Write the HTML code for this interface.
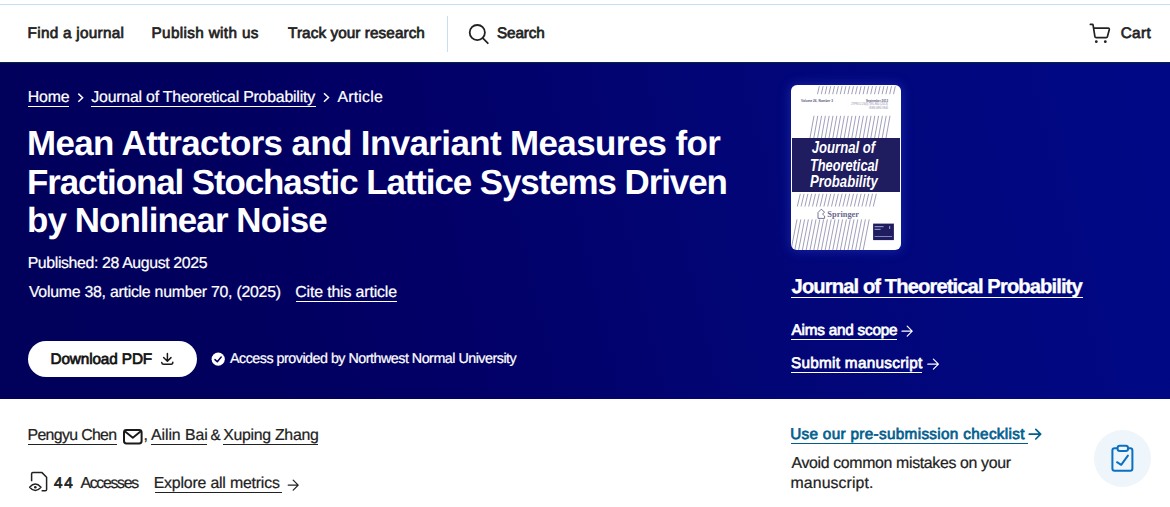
<!DOCTYPE html>
<html><head><meta charset="utf-8">
<style>
html,body{margin:0;padding:0;}
body{width:1170px;height:507px;overflow:hidden;position:relative;background:#fff;font-family:"Liberation Sans",sans-serif;}
.t{position:absolute;white-space:nowrap;text-rendering:geometricPrecision;}
.u{position:absolute;height:1px;}
#topline{position:absolute;left:0;top:4px;width:1170px;height:1px;background:#c6e0f3;}
#sep{position:absolute;left:447px;top:16px;width:1px;height:36px;background:#c6e0f3;}
#mast{position:absolute;left:0;top:62px;width:1170px;height:336px;border-top:1px solid #01283c;
 background:linear-gradient(77deg,#01005a 0%,#01005e 20%,#020067 38%,#02036f 52%,#020574 60%,#01077e 80%,#000886 100%);}
#btn{position:absolute;left:28px;top:341px;width:169px;height:36px;border-radius:18px;background:#fff;}
#cover{position:absolute;left:791px;top:85px;width:110px;height:165px;border-radius:6px;background:#fff;
 box-shadow:0 0 12px 1px rgba(70,100,255,.32);overflow:hidden;}
#chkc{position:absolute;left:1094px;top:430px;width:57px;height:57px;border-radius:50%;background:#eef5fb;}
svg{position:absolute;overflow:visible;}
</style></head><body>
<div id="topline"></div>
<div id="sep"></div>
<!-- search icon -->
<svg style="left:0;top:0" width="1170" height="507" viewBox="0 0 1170 507">
 <circle cx="477.3" cy="32.6" r="7.6" fill="none" stroke="#222" stroke-width="1.8"/>
 <line x1="482.8" y1="38.2" x2="487.8" y2="43.2" stroke="#222" stroke-width="1.8" stroke-linecap="round"/>
 <!-- cart -->
 <path d="M1090.4 24.4 H1092.3 Q1093 24.4 1093.1 25.1 L1094.9 36.6 Q1095.1 37.7 1096.2 37.7 H1106.2 Q1107.2 37.7 1107.4 36.7 L1109.3 29.5 Q1109.5 28.2 1108.2 28.2 H1093.7" fill="none" stroke="#222" stroke-width="1.7" stroke-linejoin="round" stroke-linecap="round"/>
 <circle cx="1096.3" cy="41.7" r="1.4" fill="#222"/>
 <circle cx="1105.3" cy="41.7" r="1.4" fill="#222"/>
</svg>
<div id="mast"></div>
<svg style="left:0;top:0" width="1170" height="507" viewBox="0 0 1170 507">
 <!-- breadcrumb chevrons -->
 <path d="M78.3 93.6 L82.6 97.7 L78.3 101.8" fill="none" stroke="#fff" stroke-width="1.5"/>
 <path d="M324 93.3 L328.5 97.5 L324 101.7" fill="none" stroke="#fff" stroke-width="1.5"/>
</svg>
<div id="btn"></div>
<svg style="left:0;top:0" width="1170" height="507" viewBox="0 0 1170 507">
 <!-- download icon -->
 <path d="M167.4 353.6 V361 M163.6 357.5 L167.4 361.2 L171 357.6" fill="none" stroke="#1a1a1a" stroke-width="1.5" stroke-linecap="round" stroke-linejoin="round"/>
 <path d="M161.7 362.4 Q161.9 364.3 163.7 364.3 H171.2 Q172.8 364.3 172.8 362.3" fill="none" stroke="#1a1a1a" stroke-width="1.5" stroke-linecap="round" stroke-linejoin="round"/>
 <!-- access check -->
 <circle cx="218.2" cy="359.2" r="6.6" fill="#fff"/>
 <path d="M215 359.6 L217.3 361.8 L221.2 357" fill="none" stroke="#01005a" stroke-width="1.5" stroke-linecap="round" stroke-linejoin="round"/>
 <!-- arrows -->
 <path d="M902 331.2 H912.2 M907.2 326.2 L912.2 331.2 L907.2 336.2" fill="none" stroke="#fff" stroke-width="1.2" stroke-linecap="round" stroke-linejoin="round"/>
 <path d="M927.8 364.2 H938.4 M933.4 359.2 L938.4 364.2 L933.4 369.2" fill="none" stroke="#fff" stroke-width="1.2" stroke-linecap="round" stroke-linejoin="round"/>
</svg>
<div id="cover">
<svg style="left:0;top:0" width="110" height="165" viewBox="0 0 110 165">
<g stroke="#77759e" stroke-width="0.7"><line x1="26.50" y1="9.2" x2="28.30" y2="1.2"/><line x1="30.30" y1="9.2" x2="32.10" y2="1.2"/><line x1="34.10" y1="9.2" x2="35.90" y2="1.2"/><line x1="37.90" y1="9.2" x2="39.70" y2="1.2"/><line x1="41.70" y1="9.2" x2="43.50" y2="1.2"/><line x1="45.50" y1="9.2" x2="47.30" y2="1.2"/><line x1="49.30" y1="9.2" x2="51.10" y2="1.2"/><line x1="53.10" y1="9.2" x2="54.90" y2="1.2"/><line x1="56.90" y1="9.2" x2="58.70" y2="1.2"/><line x1="60.70" y1="9.2" x2="62.50" y2="1.2"/><line x1="64.50" y1="9.2" x2="66.30" y2="1.2"/><line x1="68.30" y1="9.2" x2="70.10" y2="1.2"/><line x1="72.10" y1="9.2" x2="73.90" y2="1.2"/><line x1="75.90" y1="9.2" x2="77.70" y2="1.2"/><line x1="79.70" y1="9.2" x2="81.50" y2="1.2"/><line x1="83.50" y1="9.2" x2="85.30" y2="1.2"/><line x1="87.30" y1="9.2" x2="89.10" y2="1.2"/><line x1="91.10" y1="9.2" x2="92.90" y2="1.2"/><line x1="94.90" y1="9.2" x2="96.70" y2="1.2"/><line x1="98.70" y1="9.2" x2="100.50" y2="1.2"/><line x1="102.50" y1="9.2" x2="104.30" y2="1.2"/></g>
<g font-family="Liberation Sans" font-weight="700" fill="#55537a"><text x="10" y="16.6" font-size="4.3" textLength="32" lengthAdjust="spacingAndGlyphs">Volume 26, Number 3</text><text x="75" y="16.6" font-size="4.3" textLength="22" lengthAdjust="spacingAndGlyphs">September 2013</text></g><g font-family="Liberation Sans" fill="#8a88a8"><text x="60" y="20.4" font-size="3.6" textLength="37" lengthAdjust="spacingAndGlyphs">JTPROJ 26(3) 595-860 (2013)</text><text x="78" y="24" font-size="3.6" textLength="19" lengthAdjust="spacingAndGlyphs">ISSN 0894-9840</text></g>
<g stroke="#77759e" stroke-width="0.7"><line x1="19.00" y1="53" x2="23.00" y2="30.8"/><line x1="22.80" y1="53" x2="26.80" y2="30.8"/><line x1="26.60" y1="53" x2="30.60" y2="30.8"/><line x1="30.40" y1="53" x2="34.40" y2="30.8"/><line x1="34.20" y1="53" x2="38.20" y2="30.8"/><line x1="38.00" y1="53" x2="42.00" y2="30.8"/><line x1="41.80" y1="53" x2="45.80" y2="30.8"/><line x1="45.60" y1="53" x2="49.60" y2="30.8"/><line x1="49.40" y1="53" x2="53.40" y2="30.8"/><line x1="53.20" y1="53" x2="57.20" y2="30.8"/><line x1="57.00" y1="53" x2="61.00" y2="30.8"/><line x1="60.80" y1="53" x2="64.80" y2="30.8"/><line x1="64.60" y1="53" x2="68.60" y2="30.8"/><line x1="68.40" y1="53" x2="72.40" y2="30.8"/><line x1="72.20" y1="53" x2="76.20" y2="30.8"/><line x1="76.00" y1="53" x2="80.00" y2="30.8"/><line x1="79.80" y1="53" x2="83.80" y2="30.8"/><line x1="83.60" y1="53" x2="87.60" y2="30.8"/><line x1="87.40" y1="53" x2="91.40" y2="30.8"/><line x1="91.20" y1="53" x2="95.20" y2="30.8"/><line x1="95.00" y1="53" x2="99.00" y2="30.8"/></g>
<rect x="1" y="53" width="108" height="54" fill="#201c60"/>
<g fill="#fff" font-family="Liberation Sans" font-weight="700" font-style="italic" font-size="16.4">
<text transform="translate(20.8 67.8) scale(0.80 1)">Journal of</text>
<text transform="translate(19 85.5) scale(0.78 1)">Theoretical</text>
<text transform="translate(19 102.1) scale(0.80 1)">Probability</text>
</g>
<g stroke="#77759e" stroke-width="0.7"><line x1="6.30" y1="121.5" x2="9.30" y2="108.8"/><line x1="10.10" y1="121.5" x2="13.10" y2="108.8"/><line x1="13.90" y1="121.5" x2="16.90" y2="108.8"/><line x1="17.70" y1="121.5" x2="20.70" y2="108.8"/><line x1="21.50" y1="121.5" x2="24.50" y2="108.8"/><line x1="25.30" y1="121.5" x2="28.30" y2="108.8"/><line x1="29.10" y1="121.5" x2="32.10" y2="108.8"/><line x1="32.90" y1="121.5" x2="35.90" y2="108.8"/><line x1="36.70" y1="121.5" x2="39.70" y2="108.8"/><line x1="40.50" y1="121.5" x2="43.50" y2="108.8"/><line x1="44.30" y1="121.5" x2="47.30" y2="108.8"/><line x1="48.10" y1="121.5" x2="51.10" y2="108.8"/><line x1="51.90" y1="121.5" x2="54.90" y2="108.8"/><line x1="55.70" y1="121.5" x2="58.70" y2="108.8"/><line x1="59.50" y1="121.5" x2="62.50" y2="108.8"/><line x1="63.30" y1="121.5" x2="66.30" y2="108.8"/><line x1="67.10" y1="121.5" x2="70.10" y2="108.8"/><line x1="70.90" y1="121.5" x2="73.90" y2="108.8"/><line x1="74.70" y1="121.5" x2="77.70" y2="108.8"/><line x1="78.50" y1="121.5" x2="81.50" y2="108.8"/><line x1="82.30" y1="121.5" x2="85.30" y2="108.8"/></g>
<path d="M27 133.4 V127.5 L30.2 124.2 L33.6 127.2 L31.5 129 L33.6 131 V133.4 Z" fill="none" stroke="#6a6890" stroke-width="0.9"/>
<text x="36.3" y="132" font-size="8.6" font-family="Liberation Serif" font-weight="700" fill="#6a6890" transform="translate(36.3 0) scale(0.98 1) translate(-36.3 0)">Springer</text>
<g stroke="#77759e" stroke-width="0.7"><line x1="0.00" y1="165" x2="6.00" y2="134.4"/><line x1="3.80" y1="165" x2="9.80" y2="134.4"/><line x1="7.60" y1="165" x2="13.60" y2="134.4"/><line x1="11.40" y1="165" x2="17.40" y2="134.4"/><line x1="15.20" y1="165" x2="21.20" y2="134.4"/><line x1="19.00" y1="165" x2="25.00" y2="134.4"/><line x1="22.80" y1="165" x2="28.80" y2="134.4"/><line x1="26.60" y1="165" x2="32.60" y2="134.4"/><line x1="30.40" y1="165" x2="36.40" y2="134.4"/><line x1="34.20" y1="165" x2="40.20" y2="134.4"/><line x1="38.00" y1="165" x2="44.00" y2="134.4"/><line x1="41.80" y1="165" x2="47.80" y2="134.4"/><line x1="45.60" y1="165" x2="51.60" y2="134.4"/><line x1="49.40" y1="165" x2="55.40" y2="134.4"/><line x1="53.20" y1="165" x2="59.20" y2="134.4"/><line x1="57.00" y1="165" x2="63.00" y2="134.4"/><line x1="60.80" y1="165" x2="66.80" y2="134.4"/><line x1="64.60" y1="165" x2="70.60" y2="134.4"/><line x1="68.40" y1="165" x2="74.40" y2="134.4"/><line x1="72.20" y1="165" x2="78.20" y2="134.4"/></g>
<rect x="82.1" y="138.6" width="20.8" height="16.5" fill="#201c60"/>
<g fill="#8f8dc0"><rect x="83.6" y="141" width="9" height="1.2"/><rect x="83.6" y="143.8" width="6" height="1.2"/><rect x="98" y="141" width="1.2" height="3"/><rect x="83.6" y="151" width="17.5" height="0.9"/></g>
</svg>
</div>
<div id="chkc"></div>
<svg style="left:0;top:0" width="1170" height="507" viewBox="0 0 1170 507">
 <!-- mail -->
 <rect x="124" y="430" width="17.6" height="13.4" rx="2.4" fill="none" stroke="#1a1a1a" stroke-width="2"/>
 <path d="M124.8 431.2 L132.8 437.8 L140.8 431.2" fill="none" stroke="#1a1a1a" stroke-width="1.9" stroke-linejoin="round"/>
 <!-- access doc icon -->
 <path d="M31.6 481.3 V473.9 Q31.6 472.6 32.9 472.6 H42 L46.6 477.2 V489.4 Q46.6 490.7 45.3 490.7 H41.6" fill="none" stroke="#222" stroke-width="1.5" stroke-linejoin="round"/>
 <path d="M29.6 487.3 Q35.3 480.8 41 487.3 Q35.3 493.8 29.6 487.3 Z" fill="none" stroke="#222" stroke-width="1.4" stroke-linejoin="round"/>
 <circle cx="35.3" cy="487.3" r="1.3" fill="#222"/>
 <!-- explore arrow -->
 <path d="M288.2 485.1 H298.2 M293.2 480.1 L298.2 485.1 L293.2 490.1" fill="none" stroke="#222" stroke-width="1.3" stroke-linecap="round" stroke-linejoin="round"/>
 <!-- checklist arrow -->
 <path d="M1029.3 434.2 H1040.6 M1035.8 429.4 L1040.6 434.2 L1035.8 439" fill="none" stroke="#025e8d" stroke-width="1.7" stroke-linecap="round" stroke-linejoin="round"/>
 <!-- clipboard -->
 <rect x="1112.4" y="448.2" width="20" height="22.6" rx="2.2" fill="none" stroke="#0b70c0" stroke-width="2"/>
 <rect x="1117.6" y="445.8" width="10.4" height="5.2" rx="2.2" fill="#eef5fb" stroke="#0b70c0" stroke-width="2"/>
 <path d="M1117 462.2 L1121.2 464.8 L1127.9 455.6" fill="none" stroke="#0b70c0" stroke-width="2" stroke-linecap="round" stroke-linejoin="round"/>
</svg>
<!-- underlines -->
<div class="u" style="left:28px;top:106px;width:41px;background:#fff"></div>
<div class="u" style="left:91px;top:106px;width:225px;background:#fff"></div>
<div class="u" style="left:296px;top:301px;width:101px;background:#fff"></div>
<div class="u" style="left:791px;top:297px;width:292px;background:#fff"></div>
<div class="u" style="left:791px;top:339px;width:106px;background:#fff"></div>
<div class="u" style="left:791px;top:372px;width:131px;background:#fff"></div>
<div class="u" style="left:28px;top:444px;width:89px;background:#222"></div>
<div class="u" style="left:151px;top:444px;width:56px;background:#222"></div>
<div class="u" style="left:223px;top:444px;width:95px;background:#222"></div>
<div class="u" style="left:155px;top:492px;width:127px;background:#222"></div>
<div class="u" style="left:791px;top:443px;width:237px;background:#025e8d"></div>
<div class="t" style="left:27.58px;top:24.70px;font-size:15.30px;line-height:18px;letter-spacing:0.284px;color:#222;-webkit-text-stroke:0.7px #222;">Find a journal</div>
<div class="t" style="left:151.48px;top:24.70px;font-size:15.30px;line-height:18px;letter-spacing:0.354px;color:#222;-webkit-text-stroke:0.7px #222;">Publish with us</div>
<div class="t" style="left:288.09px;top:24.70px;font-size:15.30px;line-height:18px;letter-spacing:0.074px;color:#222;-webkit-text-stroke:0.7px #222;">Track your research</div>
<div class="t" style="left:496.99px;top:24.70px;font-size:15.30px;line-height:18px;letter-spacing:-0.119px;color:#222;-webkit-text-stroke:0.7px #222;">Search</div>
<div class="t" style="left:1120.64px;top:24.70px;font-size:15.30px;line-height:18px;letter-spacing:0.378px;color:#222;-webkit-text-stroke:0.7px #222;">Cart</div>
<div class="t" style="left:27.63px;top:88.00px;font-size:15.87px;line-height:19px;letter-spacing:-0.132px;color:#fff;-webkit-text-stroke:0.22px #fff;">Home</div>
<div class="t" style="left:91.34px;top:88.00px;font-size:15.87px;line-height:19px;letter-spacing:-0.209px;color:#fff;-webkit-text-stroke:0.22px #fff;">Journal of Theoretical Probability</div>
<div class="t" style="left:337.40px;top:88.00px;font-size:15.87px;line-height:19px;letter-spacing:0.229px;color:#fff;-webkit-text-stroke:0.22px #fff;">Article</div>
<div class="t" style="left:27.00px;top:122.90px;font-size:34.92px;line-height:42px;letter-spacing:-0.601px;color:#fff;font-weight:700;">Mean Attractors and Invariant Measures for</div>
<div class="t" style="left:27.00px;top:161.90px;font-size:34.92px;line-height:42px;letter-spacing:-1.071px;color:#fff;font-weight:700;">Fractional Stochastic Lattice Systems Driven</div>
<div class="t" style="left:27.00px;top:199.90px;font-size:34.92px;line-height:42px;letter-spacing:-0.905px;color:#fff;font-weight:700;">by Nonlinear Noise</div>
<div class="t" style="left:27.63px;top:254.00px;font-size:15.87px;line-height:19px;letter-spacing:-0.367px;color:#fff;-webkit-text-stroke:0.22px #fff;">Published: 28 August 2025</div>
<div class="t" style="left:28.90px;top:283.00px;font-size:15.87px;line-height:19px;letter-spacing:-0.252px;color:#fff;-webkit-text-stroke:0.22px #fff;">Volume 38, article number 70, (2025)</div>
<div class="t" style="left:295.21px;top:283.00px;font-size:15.87px;line-height:19px;letter-spacing:-0.133px;color:#fff;-webkit-text-stroke:0.22px #fff;">Cite this article</div>
<div class="t" style="left:50.48px;top:350.70px;font-size:15.30px;line-height:18px;letter-spacing:-0.106px;color:#111;-webkit-text-stroke:0.7px #111;">Download PDF</div>
<div class="t" style="left:230.00px;top:350.55px;font-size:14.29px;line-height:17px;letter-spacing:-0.490px;color:#fff;-webkit-text-stroke:0.22px #fff;">Access provided by Northwest Normal University</div>
<div class="t" style="left:791.60px;top:275.00px;font-size:20.20px;line-height:24px;letter-spacing:-0.901px;color:#fff;font-weight:700;-webkit-text-stroke:0.35px #fff;">Journal of Theoretical Probability</div>
<div class="t" style="left:791.60px;top:321.70px;font-size:15.30px;line-height:18px;letter-spacing:-0.229px;color:#fff;-webkit-text-stroke:0.7px #fff;">Aims and scope</div>
<div class="t" style="left:790.99px;top:354.70px;font-size:15.30px;line-height:18px;letter-spacing:0.289px;color:#fff;-webkit-text-stroke:0.7px #fff;">Submit manuscript</div>
<div class="t" style="left:27.53px;top:426.00px;font-size:15.87px;line-height:19px;letter-spacing:-0.653px;color:#222;-webkit-text-stroke:0.22px #222;">Pengyu Chen</div>
<div class="t" style="left:143.43px;top:426.00px;font-size:15.87px;line-height:19px;letter-spacing:0.000px;color:#222;-webkit-text-stroke:0.22px #222;">,</div>
<div class="t" style="left:151.00px;top:426.00px;font-size:15.87px;line-height:19px;letter-spacing:-0.070px;color:#222;-webkit-text-stroke:0.22px #222;">Ailin Bai</div>
<div class="t" style="left:210.55px;top:426.75px;font-size:15.15px;line-height:18px;letter-spacing:0.000px;color:#222;-webkit-text-stroke:0.22px #222;">&amp;</div>
<div class="t" style="left:223.18px;top:426.00px;font-size:15.87px;line-height:19px;letter-spacing:-0.285px;color:#222;-webkit-text-stroke:0.22px #222;">Xuping Zhang</div>
<div class="t" style="left:53.89px;top:474.70px;font-size:15.30px;line-height:18px;letter-spacing:1.892px;color:#222;-webkit-text-stroke:0.7px #222;">44</div>
<div class="t" style="left:80.40px;top:474.00px;font-size:15.87px;line-height:19px;letter-spacing:-1.293px;color:#222;-webkit-text-stroke:0.22px #222;">Accesses</div>
<div class="t" style="left:153.73px;top:474.00px;font-size:15.87px;line-height:19px;letter-spacing:-0.190px;color:#222;-webkit-text-stroke:0.22px #222;">Explore all metrics</div>
<div class="t" style="left:790.13px;top:425.70px;font-size:15.30px;line-height:18px;letter-spacing:0.320px;color:#025e8d;-webkit-text-stroke:0.7px #025e8d;">Use our pre-submission checklist</div>
<div class="t" style="left:791.50px;top:454.00px;font-size:15.87px;line-height:19px;letter-spacing:-0.338px;color:#222;-webkit-text-stroke:0.22px #222;">Avoid common mistakes on your</div>
<div class="t" style="left:790.55px;top:474.00px;font-size:15.87px;line-height:19px;letter-spacing:0.081px;color:#222;-webkit-text-stroke:0.22px #222;">manuscript.</div>
</body></html>
